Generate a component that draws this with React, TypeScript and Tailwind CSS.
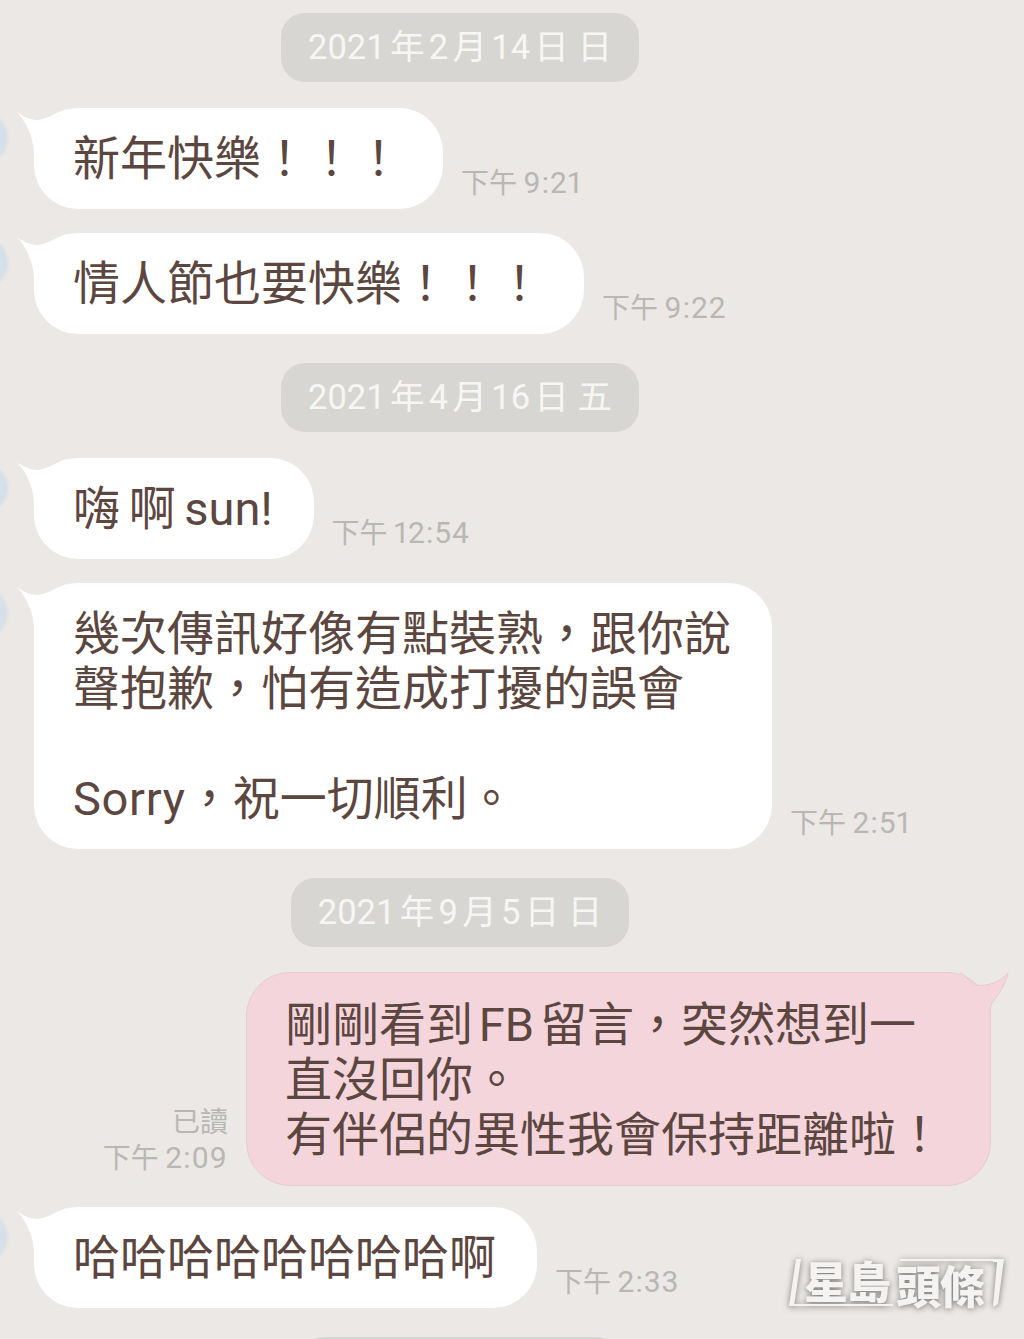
import React from 'react'

const font = '[font-family:Roboto,"Noto_Sans_CJK_TC",sans-serif] [text-autospace:normal]'

const DatePill = ({ label, className = '' }: { label: string; className?: string }) => (
  <div className={`w-[920px] flex justify-center ${className}`}>
    <div className="h-[69px] px-[27px] rounded-[24px] bg-[#d8d6d2] text-[#f7f6f4] text-[34.5px] leading-[69px] whitespace-pre">
      {label}
    </div>
  </div>
)

const Avatar = () => (
  <div className="w-[64px] h-[50px] -ml-[56px] mt-[5px] rounded-full bg-[#d5e0e9] blur-[1px] shrink-0" />
)

const Time = ({ value }: { value: string }) => (
  <div className="whitespace-pre text-[#b9b7b3] leading-[35px]">
    <span className="text-[28px]">下午</span>
    <span className="text-[30px] ml-[3px] tracking-[1px] proportional-nums">{value}</span>
  </div>
)

const Incoming = ({
  lines,
  time,
  className = '',
}: {
  lines: React.ReactNode[]
  time: string
  className?: string
}) => (
  <div className={`flex items-start ${className}`}>
    <Avatar />
    <div className="relative ml-[26px] flex items-end">
      <svg className="absolute left-[-18px] top-0 w-[60px] h-[50px]" viewBox="0 0 60 50">
        <path d="M1 4 C6 8 14 12 21 12 C28 12 38 6 50 1 L50 44 L18 50 C19 34 12 16 1 4Z" fill="#ffffff" />
      </svg>
      <div className="relative bg-white rounded-[44px] pl-[39px] pr-[41px] py-[23px] text-[47px] leading-[55px] text-[#5b4640] whitespace-pre [word-spacing:-3px]">
        {lines.map((l, i) => (
          <div key={i} className="h-[55px]">{l}</div>
        ))}
      </div>
      <div className="ml-[18px] pb-[4px]">
        <Time value={time} />
      </div>
    </div>
  </div>
)

const Logo = () => (
  <div className="absolute left-[788px] top-[1255px] w-[218px] h-[56px] text-[#f4f3f1] drop-shadow-[0_1px_3px_rgba(70,70,70,0.7)]">
    <svg className="absolute inset-0 w-full h-full" viewBox="0 0 218 56" fill="#f4f3f1">
      <path d="M8 4 H13 L6 51 H1Z" />
      <path d="M205 4 H216 L210 49 L205 52 L209 7 H205Z" />
      <path d="M112 4 H206 V6 H112Z" />
      <path d="M3 49 H105 V51 H3Z" />
    </svg>
    <div className="absolute left-[16px] top-[2px] text-[44px] leading-[46px] font-black tracking-[-1px] [font-family:'Noto_Sans_CJK_TC',sans-serif] whitespace-pre">星島</div>
    <div className="absolute left-[108px] top-[7px] text-[45px] leading-[46px] font-black tracking-[-1px] [font-family:'Noto_Sans_CJK_TC',sans-serif] whitespace-pre">頭條</div>
  </div>
)

export default function App() {
  return (
    <div className={`relative w-[1024px] h-[1339px] overflow-hidden bg-[#ebe8e5] pt-[13px] ${font}`}>
      <DatePill label="2021年2月14日 日" />
      <Incoming className="mt-[26px]" lines={['新年快樂！！！']} time="9:21" />
      <Incoming className="mt-[24px]" lines={['情人節也要快樂！！！']} time="9:22" />
      <DatePill className="mt-[29px]" label="2021年4月16日 五" />
      <Incoming className="mt-[26px]" lines={['嗨 啊 sun!']} time="12:54" />
      <Incoming
        className="mt-[24px]"
        lines={[
          '幾次傳訊好像有點裝熟，跟你說',
          '聲抱歉，怕有造成打擾的誤會',
          '',
          <>
            <span className="tracking-[0.7px]">Sorry</span>，祝一切順利。
          </>,
        ]}
        time="2:51"
      />
      <DatePill className="mt-[29px]" label="2021年9月5日 日" />

      {/* outgoing bubble */}
      <div className="mt-[25px] pr-[33px] flex justify-end items-end">
        <div className="mr-[18px] pb-[10px] text-right text-[28px] leading-[35px] text-[#b9b7b3] whitespace-pre">
          <div>已讀</div>
          <Time value="2:09" />
        </div>
        <div className="relative">
          <div className="bg-[#f5d5dc] border border-[#e6cbd0] rounded-[44px] pl-[38px] pr-[47px] pt-[24px] pb-[23px] text-[47px] leading-[55px] text-[#5b4640] whitespace-pre">
            <div>剛剛看到FB留言，突然想到一</div>
            <div>直沒回你。</div>
            <div>有伴侶的異性我會保持距離啦！</div>
          </div>
          <svg className="absolute right-[-19px] top-0 w-[50px] h-[50px]" viewBox="0 0 50 50">
            <path d="M0 2 C5 3 9 9 14 13 C28 15 40 10 48 1 C47 10 38 24 32 31 C30 34 30 40 30 44 L0 44 Z" fill="#f5d5dc" />
            <path d="M0 1 C5 2 9 9 14 13 C28 15 40 10 48 1 C47 10 38 24 32 31 C30 34 30 40 30 44" fill="none" stroke="#e6cbd0" strokeWidth="1" />
          </svg>
        </div>
      </div>

      <Incoming className="mt-[21px]" lines={['哈哈哈哈哈哈哈哈啊']} time="2:33" />
      <div className="mt-[29px] w-[920px] flex justify-center">
        <div className="h-[69px] w-[321px] rounded-[24px] bg-[#d8d6d2]" />
      </div>
      <Logo />
    </div>
  )
}
